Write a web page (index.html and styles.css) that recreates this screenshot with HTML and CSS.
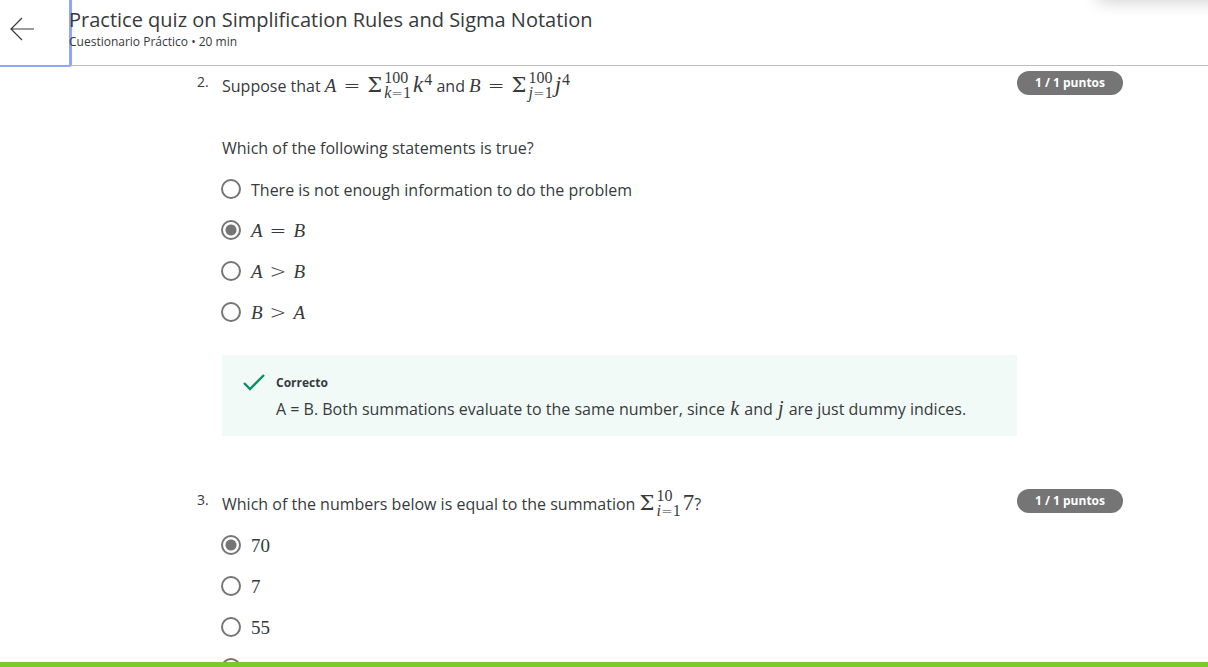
FILE: index.html
```html
<!DOCTYPE html>
<html lang="es">
<head>
<meta charset="utf-8">
<title>Practice quiz on Simplification Rules and Sigma Notation</title>
<link rel="stylesheet" href="styles.css">
</head>
<body>
<header class="header">
  <button class="back" type="button" aria-label="Volver">
    <svg width="24" height="24" viewBox="0 0 24 24" fill="none" stroke="currentColor" stroke-width="1.2"><path d="M24 12H1M12 1L1 12l11 11"/></svg>
  </button>
  <div class="heading">
    <h1 class="title">Practice quiz on Simplification Rules and Sigma Notation</h1>
    <p class="subtitle">Cuestionario Práctico • 20 min</p>
  </div>
  <div class="popover-edge"></div>
</header>
<main class="quiz">
  <section class="question">
    <span class="number">2.</span>
    <div class="content">
      <p class="prompt">Suppose that <span class="math"><i>A</i><span class="op">=</span><span class="sum"><span class="sigma">Σ</span><span class="limits"><span>100</span><span><i>k</i><span class="small-op">=</span>1</span></span><i class="term">k</i><span class="power">4</span></span></span> and <span class="math"><i>B</i><span class="op">=</span><span class="sum"><span class="sigma">Σ</span><span class="limits"><span>100</span><span><i>j</i><span class="small-op">=</span>1</span></span><i class="term">j</i><span class="power">4</span></span></span></p>
      <p class="followup">Which of the following statements is true?</p>
      <div class="options">
        <label class="option"><input class="radio" type="radio" name="q2"><span>There is not enough information to do the problem</span></label>
        <label class="option"><input class="radio" type="radio" name="q2" checked><span class="math"><i>A</i><span class="op">=</span><i>B</i></span></label>
        <label class="option"><input class="radio" type="radio" name="q2"><span class="math"><i>A</i><span class="op">&gt;</span><i>B</i></span></label>
        <label class="option"><input class="radio" type="radio" name="q2"><span class="math"><i>B</i><span class="op">&gt;</span><i>A</i></span></label>
      </div>
      <div class="feedback">
        <svg class="check" width="22" height="18" viewBox="0 0 22 18" fill="none" stroke="currentColor" stroke-width="2.4"><path d="M1 9l6 6L21 1"/></svg>
        <div>
          <h2 class="verdict">Correcto</h2>
          <p class="explanation">A = B. Both summations evaluate to the same number, since <i class="variable">k</i> and <i class="variable">j</i> are just dummy indices.</p>
        </div>
      </div>
    </div>
    <span class="points">1 / 1 puntos</span>
  </section>
  <section class="question">
    <span class="number">3.</span>
    <div class="content">
      <p class="prompt">Which of the numbers below is equal to the summation <span class="math"><span class="sum"><span class="sigma">Σ</span><span class="limits"><span>10</span><span><i>i</i><span class="small-op">=</span>1</span></span><span class="term">7</span></span></span>?</p>
      <div class="options compact">
        <label class="option"><input class="radio" type="radio" name="q3" checked><span class="math">70</span></label>
        <label class="option"><input class="radio" type="radio" name="q3"><span class="math">7</span></label>
        <label class="option"><input class="radio" type="radio" name="q3"><span class="math">55</span></label>
        <label class="option"><input class="radio" type="radio" name="q3" aria-label="Opción 4"></label>
      </div>
    </div>
    <span class="points">1 / 1 puntos</span>
  </section>
</main>
<div class="progress"></div>
</body>
</html>
```
FILE: styles.css
```css
* { box-sizing: border-box; }
body {
  margin: 0;
  height: 100vh;
  display: flex;
  flex-direction: column;
  overflow: hidden;
  background: #fff;
  color: #373a3c;
  font: 16px/24px "Open Sans", sans-serif;
}
h1, h2, p { margin: 0; }
.header {
  position: relative;
  z-index: 1;
  flex: none;
  display: flex;
  height: 66px;
  border-bottom: 1px solid #bdbdbd;
}
.back {
  flex: none;
  width: 72px;
  height: 67px;
  margin-right: -3px;
  padding: 0 0 8px 10px;
  display: flex;
  align-items: center;
  border: 0 solid #8fa6fb;
  border-width: 0 3px 2px 0;
  border-radius: 0 0 3px 0;
  background: none;
  color: #373a3c;
}
.heading { padding-top: 6px; position: relative; }
.title { font-size: 20px; line-height: 28px; font-weight: 400; }
.subtitle { font-size: 12px; line-height: 16px; }
.popover-edge {
  position: absolute;
  top: -20px;
  right: -20px;
  width: 132px;
  height: 20px;
  border-radius: 8px;
  box-shadow: 0 2px 16px rgba(0, 0, 0, 0.18);
}
.quiz {
  flex: 1;
  min-height: 0;
  overflow: hidden;
  padding: 5px 85px 0 197px;
}
.question {
  display: grid;
  grid-template-columns: 25px 1fr 106px;
  align-items: start;
  margin-bottom: 53px;
}
.number { font-size: 14px; line-height: 22px; }
.points {
  border-radius: 12px;
  background: #757575;
  color: #fff;
  font-size: 12px;
  line-height: 24px;
  font-weight: 700;
  text-align: center;
}
.prompt { height: 30px; line-height: 30px; white-space: nowrap; }
.followup { margin-top: 35px; }
.math {
  display: inline-flex;
  align-items: baseline;
  gap: 6px;
  font-family: "Liberation Serif", serif;
  font-size: 19px;
  line-height: 24px;
}
.op, .small-op { font-family: "DejaVu Sans", sans-serif; font-weight: 200; }
.op { padding: 0 1px; font-size: 20px; }
.small-op { font-size: 14px; line-height: 14px; }
.sum { display: inline-flex; align-items: center; height: 24px; }
.sigma {
  width: 17px;
  font-family: "DejaVu Serif", serif;
  font-size: 21px;
}
.limits {
  display: flex;
  flex-direction: column;
  margin-right: 2px;
  font-size: 16px;
  line-height: 15px;
}
.term { font-size: 23px; }
.power { align-self: flex-start; margin-left: 1px; font-size: 16px; line-height: 14px; }
.options { display: grid; margin-top: 9px; }
.compact { margin-top: 6px; }
.option { display: flex; align-items: center; gap: 10px; height: 41px; }
.radio {
  appearance: none;
  flex: none;
  width: 20px;
  height: 20px;
  margin: 0 0 2px -1px;
  border: 2px solid #757575;
  border-radius: 50%;
  background: #fff;
}
.radio:checked {
  background: radial-gradient(circle, #757575 5px, #fff 6px);
}
.feedback {
  display: flex;
  gap: 11px;
  margin-top: 22px;
  padding: 18px 21px 15px;
  background: #f2faf8;
}
.check { flex: none; margin-top: 1px; color: #08905f; }
.verdict { margin-bottom: 4px; font-size: 12px; line-height: 20px; font-weight: 700; }
.variable {
  padding: 0 1px;
  font-family: "Liberation Serif", serif;
  font-size: 20px;
  line-height: 20px;
}
.progress { flex: none; height: 5px; background: #7dc92b; }
```
